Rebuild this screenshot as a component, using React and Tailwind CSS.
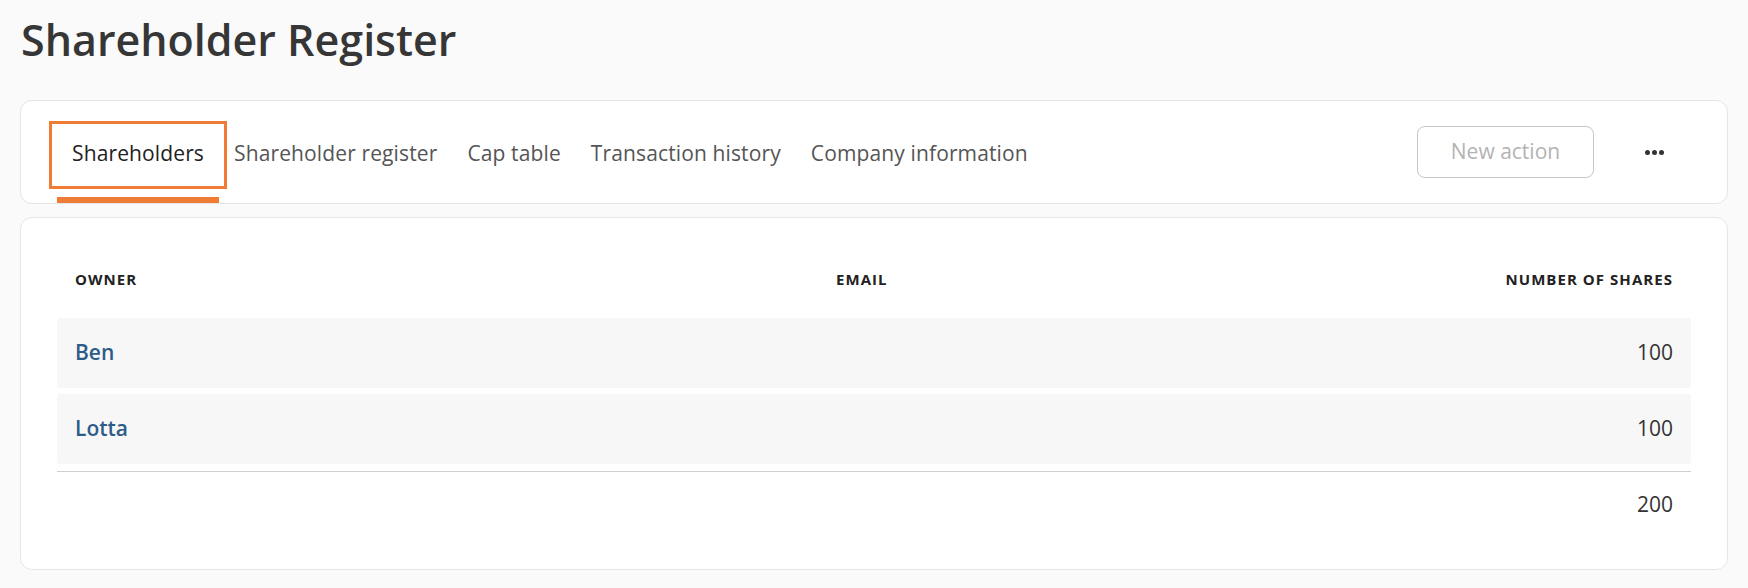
import React, { useState } from "react";

const tabs = [
  "Shareholders",
  "Shareholder register",
  "Cap table",
  "Transaction history",
  "Company information",
];

const owners = [
  { name: "Ben", email: "", shares: 100 },
  { name: "Lotta", email: "", shares: 100 },
];

export default function App() {
  const [active, setActive] = useState("Shareholders");
  const total = owners.reduce((sum, o) => sum + o.shares, 0);

  return (
    <div
      className="min-h-screen bg-[#fafafa] px-5 pb-5 text-[#333]"
      style={{ fontFamily: "'Open Sans', Lato, sans-serif" }}
    >
      <h1 className="pt-[16px] pl-[1px] text-[43px] font-semibold leading-[48px] text-[#363636]">
        Shareholder Register
      </h1>

      {/* tab bar */}
      <div className="mt-[36px] flex h-[104px] items-stretch rounded-xl border border-[#e6e6e6] bg-white pl-[36px] pr-[53px]">
        <div className="flex">
          {tabs.map((tab) => {
            const isActive = tab === active;
            return (
              <div key={tab} className="flex flex-col">
                <button
                  onClick={() => setActive(tab)}
                  className={
                    "mt-[28px] flex h-[52px] items-center whitespace-nowrap px-[15px] pb-[3px] text-[21px] tracking-[0.006em] " +
                    (isActive
                      ? "text-[#222] outline-[3px] outline-offset-[5px] outline-[#ef7b34]"
                      : "text-[#555]")
                  }
                >
                  {tab}
                </button>
                <div
                  className={
                    "mt-auto h-[6px] " + (isActive ? "bg-[#ef7b34]" : "bg-transparent")
                  }
                />
              </div>
            );
          })}
        </div>
        <div className="ml-auto flex items-center gap-[40px]">
          <button className="h-[52px] w-[177px] rounded-lg border border-[#c6c6c6] text-[21px] text-[#b3b3b3]">
            New action
          </button>
          <button className="flex w-[40px] items-center justify-center gap-[2px]">
            <span className="h-[5px] w-[5px] rounded-full bg-[#333]" />
            <span className="h-[5px] w-[5px] rounded-full bg-[#333]" />
            <span className="h-[5px] w-[5px] rounded-full bg-[#333]" />
          </button>
        </div>
      </div>

      {/* shareholders table */}
      <div className="mt-[13px] rounded-xl border border-[#e6e6e6] bg-white px-[36px] pt-[36px] pb-[31px]">
        <div className="flex h-[50px] items-center px-[18px] text-[15px] font-bold tracking-[0.07em] text-[#222]">
          <div className="w-[761px]">OWNER</div>
          <div className="flex-1">EMAIL</div>
          <div className="text-right">NUMBER OF SHARES</div>
        </div>
        <div className="mt-[14px] flex flex-col gap-[6px]">
          {owners.map((o) => (
            <div
              key={o.name}
              className="flex h-[70px] items-center rounded-[3px] bg-[#f7f7f7] px-[18px] text-[21px]"
            >
              <div className="w-[761px] font-semibold text-[#2d5c88]">{o.name}</div>
              <div className="flex-1">{o.email}</div>
              <div className="text-right text-[#333]">{o.shares}</div>
            </div>
          ))}
        </div>
        <div className="mt-[7px] border-t border-[#cfcfcf]" />
        <div className="flex h-[66px] items-center justify-end px-[18px] text-[21px] text-[#333]">
          {total}
        </div>
      </div>
    </div>
  );
}
